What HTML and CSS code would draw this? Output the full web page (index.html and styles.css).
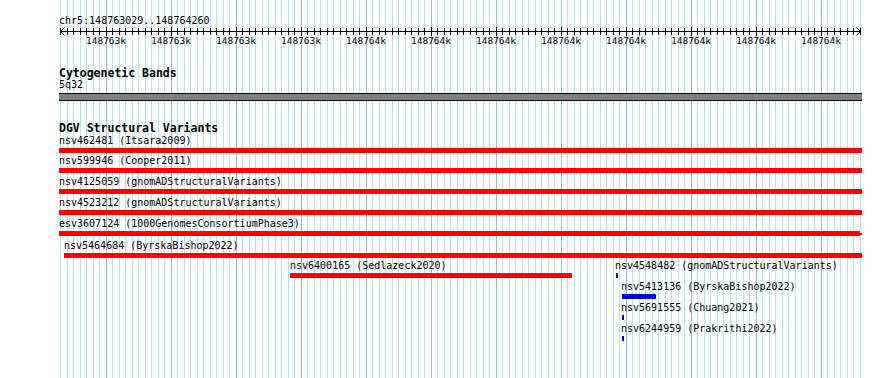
FILE: index.html
```html
<!DOCTYPE html>
<html lang="en">
<head>
    <meta charset="UTF-8">
    <title>chr5:148763029..148764260</title>
    <link rel="stylesheet" href="styles.css">
</head>
<body>
<div class="view">
    <!-- gridlines behind every track -->
    <svg class="grid" width="890" height="378">
        <defs>
            <pattern id="minorGrid" x="54" y="0" width="13" height="378" patternUnits="userSpaceOnUse">
                <rect x="0" y="0" width="1" height="378" fill="#a6eaf0"/>
                <rect x="6" y="0" width="1" height="378" fill="#a6eaf0"/>
            </pattern>
            <pattern id="majorGrid" x="106" y="0" width="65" height="378" patternUnits="userSpaceOnUse">
                <rect x="0" y="0" width="1" height="378" fill="#84c4ea"/>
            </pattern>
            <pattern id="minorTick" x="54" y="0" width="13" height="40" patternUnits="userSpaceOnUse">
                <rect x="0" y="0" width="1" height="40" fill="#000"/>
                <rect x="6" y="0" width="1" height="40" fill="#000"/>
            </pattern>
            <pattern id="majorTick" x="106" y="0" width="65" height="40" patternUnits="userSpaceOnUse">
                <rect x="0" y="0" width="1" height="40" fill="#000"/>
            </pattern>
        </defs>
        <rect x="60" y="0" width="801" height="378" fill="url(#minorGrid)"/>
        <rect x="60" y="0" width="801" height="378" fill="url(#majorGrid)"/>
    </svg>

    <div class="content">
        <div class="ruler">
            <div class="locus">chr5:148763029..148764260</div>
            <svg class="scale" width="890" height="20">
                <rect x="60" y="2" width="801" height="7" fill="url(#minorTick)"/>
                <rect x="60" y="1" width="801" height="9" fill="url(#majorTick)"/>
                <path d="M60 5.5H861M60.5 5.5L64.5 1.5M60.5 5.5L64.5 9.5M860.5 5.5L856.5 1.5M860.5 5.5L856.5 9.5" stroke="#000" stroke-width="1" fill="none"/>
                <g class="scale-labels" text-anchor="middle">
                    <text x="106" y="18">148763k</text>
                    <text x="171" y="18">148763k</text>
                    <text x="236" y="18">148763k</text>
                    <text x="301" y="18">148763k</text>
                    <text x="366" y="18">148764k</text>
                    <text x="431" y="18">148764k</text>
                    <text x="496" y="18">148764k</text>
                    <text x="561" y="18">148764k</text>
                    <text x="626" y="18">148764k</text>
                    <text x="691" y="18">148764k</text>
                    <text x="756" y="18">148764k</text>
                    <text x="821" y="18">148764k</text>
                </g>
            </svg>
        </div>

        <section class="track band-track">
            <h2 class="track-title">Cytogenetic Bands</h2>
            <div class="band-name">5q32</div>
            <div class="band"></div>
        </section>

        <section class="track dgv-track">
            <h2 class="track-title">DGV Structural Variants</h2>
            <div class="features">
                <div class="feature" style="left:59px;top:1px">
                    <span class="label">nsv462481 (Itsara2009)</span>
                    <div class="bar loss" style="width:803px"></div>
                </div>
                <div class="feature" style="left:59px;top:21px">
                    <span class="label">nsv599946 (Cooper2011)</span>
                    <div class="bar loss" style="width:803px"></div>
                </div>
                <div class="feature" style="left:59px;top:42px">
                    <span class="label">nsv4125059 (gnomADStructuralVariants)</span>
                    <div class="bar loss" style="width:803px"></div>
                </div>
                <div class="feature" style="left:59px;top:63px">
                    <span class="label">nsv4523212 (gnomADStructuralVariants)</span>
                    <div class="bar loss" style="width:803px"></div>
                </div>
                <div class="feature" style="left:59px;top:84px">
                    <span class="label">esv3607124 (1000GenomesConsortiumPhase3)</span>
                    <div class="bar loss strand" style="width:801px"></div>
                </div>
                <div class="feature" style="left:64px;top:106px">
                    <span class="label">nsv5464684 (ByrskaBishop2022)</span>
                    <div class="bar loss" style="width:798px"></div>
                </div>
                <div class="feature" style="left:290px;top:126px">
                    <span class="label">nsv6400165 (Sedlazeck2020)</span>
                    <div class="bar loss" style="width:282px"></div>
                </div>
                <div class="feature" style="left:615px;top:126px">
                    <span class="label">nsv4548482 (gnomADStructuralVariants)</span>
                    <div class="bar gain" style="width:2px;margin-left:1px"></div>
                </div>
                <div class="feature" style="left:621px;top:147px">
                    <span class="label">nsv5413136 (ByrskaBishop2022)</span>
                    <div class="bar gain" style="width:34px;margin-left:1px"></div>
                </div>
                <div class="feature" style="left:621px;top:168px">
                    <span class="label">nsv5691555 (Chuang2021)</span>
                    <div class="bar gain" style="width:2px;margin-left:1px"></div>
                </div>
                <div class="feature" style="left:621px;top:189px">
                    <span class="label">nsv6244959 (Prakrithi2022)</span>
                    <div class="bar gain" style="width:2px;margin-left:1px"></div>
                </div>
            </div>
        </section>
    </div>
</div>
</body>
</html>
```

FILE: styles.css
```css
body {
    margin: 0;
    background: #fff;
    color: #000;
    font-family: "DejaVu Sans Mono", "Liberation Mono", monospace;
}
.view {
    position: relative;
    width: 890px;
    height: 378px;
    overflow: hidden;
}
.grid {
    position: absolute;
    left: 0;
    top: 0;
    z-index: 0;
}
.content {
    position: relative;
    z-index: 1;
    padding-top: 16px;
}
.locus {
    margin-left: 59px;
    font-size: 10px;
    line-height: 10px;
    height: 10px;
}
.scale {
    display: block;
}
.scale-labels {
    font-family: "DejaVu Sans Mono", monospace;
    font-size: 9.5px;
    fill: #000;
}
.track {
    margin-top: 21px;
}
.track-title {
    margin: 0;
    padding-left: 59px;
    font-size: 11.5px;
    line-height: 12px;
    font-weight: bold;
}
.band-name {
    padding-left: 59px;
    font-size: 10px;
    line-height: 12px;
}
.band {
    margin: 2px 0 0 59px;
    width: 803px;
    height: 6px;
    background: #808080;
    border-top: 1px solid #000;
    border-bottom: 1px solid #000;
}
.features {
    position: relative;
    height: 220px;
}
.feature {
    position: absolute;
}
.label {
    display: block;
    font-size: 10px;
    line-height: 12px;
    white-space: nowrap;
}
.bar {
    position: relative;
    margin-top: 1px;
    height: 5px;
}
.bar.loss {
    background: #ff0000;
}
.bar.gain {
    background: #0000ee;
}
.bar.strand::after {
    content: "";
    position: absolute;
    right: -2px;
    top: 2px;
    width: 2px;
    height: 2px;
    background: #ff0000;
}
```
